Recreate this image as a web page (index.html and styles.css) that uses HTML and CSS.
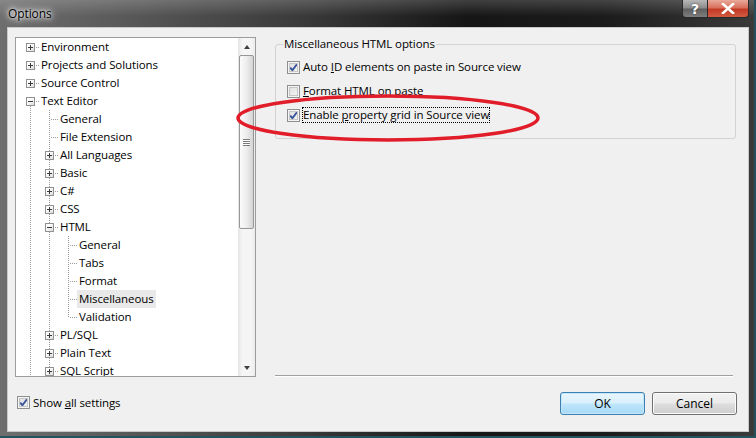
FILE: index.html
```html
<!DOCTYPE html>
<html>
<head>
<meta charset="utf-8">
<link rel="stylesheet" href="styles.css">
</head>
<body>
<div class="window">
  <div class="titlebar">
    <span class="title">Options</span>
    <div class="caption-btns">
      <span class="cap help">?</span>
      <span class="cap close"><svg width="14" height="11" viewBox="0 0 14 11"><path d="M2 1 L12 10 M12 1 L2 10" stroke="#fff" stroke-width="2.6" stroke-linecap="square"/></svg></span>
    </div>
  </div>
  <div class="client">
    <div class="main">
      <div class="tree">
        <div class="tree-items">
          <div class="row"><span class="g exp"><i class="box plus"></i></span><span class="lbl">Environment</span></div>
          <div class="row"><span class="g exp"><i class="box plus"></i></span><span class="lbl">Projects and Solutions</span></div>
          <div class="row"><span class="g exp"><i class="box plus"></i></span><span class="lbl">Source Control</span></div>
          <div class="row"><span class="g exp vd"><i class="box"></i></span><span class="lbl">Text Editor</span></div>
          <div class="row"><span class="g v"></span><span class="g t"></span><span class="lbl">General</span></div>
          <div class="row"><span class="g v"></span><span class="g t"></span><span class="lbl">File Extension</span></div>
          <div class="row"><span class="g v"></span><span class="g exp vf"><i class="box plus"></i></span><span class="lbl">All Languages</span></div>
          <div class="row"><span class="g v"></span><span class="g exp vf"><i class="box plus"></i></span><span class="lbl">Basic</span></div>
          <div class="row"><span class="g v"></span><span class="g exp vf"><i class="box plus"></i></span><span class="lbl">C#</span></div>
          <div class="row"><span class="g v"></span><span class="g exp vf"><i class="box plus"></i></span><span class="lbl">CSS</span></div>
          <div class="row"><span class="g v"></span><span class="g exp vf"><i class="box"></i></span><span class="lbl">HTML</span></div>
          <div class="row"><span class="g v"></span><span class="g v"></span><span class="g t"></span><span class="lbl">General</span></div>
          <div class="row"><span class="g v"></span><span class="g v"></span><span class="g t"></span><span class="lbl">Tabs</span></div>
          <div class="row"><span class="g v"></span><span class="g v"></span><span class="g t"></span><span class="lbl">Format</span></div>
          <div class="row"><span class="g v"></span><span class="g v"></span><span class="g t"></span><span class="lbl sel">Miscellaneous</span></div>
          <div class="row"><span class="g v"></span><span class="g v"></span><span class="g l"></span><span class="lbl">Validation</span></div>
          <div class="row"><span class="g v"></span><span class="g exp vf"><i class="box plus"></i></span><span class="lbl">PL/SQL</span></div>
          <div class="row"><span class="g v"></span><span class="g exp vf"><i class="box plus"></i></span><span class="lbl">Plain Text</span></div>
          <div class="row"><span class="g v"></span><span class="g exp vf"><i class="box plus"></i></span><span class="lbl">SQL Script</span></div>
        </div>
        <div class="vscroll">
          <div class="sb-btn"><i class="arr up"></i></div>
          <div class="thumb"><i class="grip"></i></div>
          <div class="track"></div>
          <div class="sb-btn"><i class="arr down"></i></div>
        </div>
      </div>
      <div class="right">
        <fieldset class="group">
          <legend>Miscellaneous HTML options</legend>
          <div class="opts">
            <div class="opt"><span class="cb on"></span><span class="txt">Auto <u>I</u>D elements on paste in Source view</span></div>
            <div class="opt"><span class="cb"></span><span class="txt"><u>F</u>ormat HTML on paste</span></div>
            <div class="opt"><span class="cb on"></span><span class="txt focus">Enable <u>p</u>roperty grid in Source view</span></div>
          </div>
        </fieldset>
        <div class="sep"></div>
      </div>
    </div>
    <div class="bottom">
      <div class="opt showall"><span class="cb on"></span><span class="txt">Show <u>a</u>ll settings</span></div>
      <button class="btn default">OK</button>
      <button class="btn">Cancel</button>
    </div>
  </div>
  <svg class="annot" width="310" height="52" viewBox="0 0 310 52"><ellipse cx="154" cy="25" rx="150" ry="22" fill="none" stroke="#e11d2a" stroke-width="3.5"/></svg>
</div>
</body>
</html>
```
FILE: styles.css
```css
* { box-sizing: border-box; }
html, body { margin: 0; padding: 0; }
body {
  width: 756px; height: 438px; overflow: hidden;
  font-family: "Open Sans", "Noto Sans", sans-serif;
  font-size: 11.5px; letter-spacing: -0.1px; color: #000;
  background: #1e1e1e;
}
.window {
  position: relative;
  width: 756px; height: 438px;
  display: flex; flex-direction: column;
  background: linear-gradient(to right, #6e6e6e 0%, #575757 18%, #3a3a3a 40%, #161616 62%, #1b1b1b 80%, #3a3a3a 100%);
  border-right: 2px solid #23505c;
  border-bottom: 2px solid #24525e;
}
.titlebar {
  height: 27px; flex: none;
  display: flex; align-items: flex-start;
  background: linear-gradient(to bottom, rgba(255,255,255,0.18), rgba(255,255,255,0) 60%);
}
.title {
  padding-left: 8px; line-height: 28px;
  font-size: 12px;
  color: #000;
  text-shadow: 0 0 6px #fff, 0 0 10px #fff, 0 0 3px rgba(255,255,255,0.9);
}
.caption-btns { margin-left: auto; margin-right: 5px; display: flex; }
.cap {
  height: 18px; display: flex; align-items: center; justify-content: center;
  border: 1px solid #2a2a2a; border-top: none;
  color: #fff; font-weight: bold; font-family: "DejaVu Sans", sans-serif; font-size: 14px;
}
.help {
  width: 25px; border-right: none; border-bottom-left-radius: 4px;
  background: linear-gradient(to bottom, #b7b7b7 0%, #8a8a8a 48%, #5e5e5e 52%, #7e7e7e 100%);
  text-shadow: 0 0 2px #333;
}
.close {
  width: 42px; border-bottom-right-radius: 4px;
  background: linear-gradient(to bottom, #e9a99a 0%, #d8705c 45%, #c53a24 55%, #d25a40 100%);
}
.client {
  flex: 1;
  margin: 0 5px 4px 7px;
  background: #f0f0f0;
  border: 1px solid #c9c9c9;
  display: flex; flex-direction: column;
}
.main { display: flex; padding: 9px 12px 0 7px; }
.tree {
  width: 241px; height: 340px; flex: none;
  border: 1px solid #9c9c9c;
  background: #fff;
  display: flex; overflow: hidden;
}
.tree-items { flex: 1; padding-left: 5px; overflow: hidden; }
.row { display: flex; height: 18px; }
.g {
  --dot: #9a9a9a;
  display: block; width: 19px; height: 18px; flex: none;
  background-repeat: no-repeat;
}
.v {
  background-image: repeating-linear-gradient(to bottom, var(--dot) 0 1px, transparent 1px 2px);
  background-position: 9px 0; background-size: 1px 18px;
}
.t, .l {
  background-image: repeating-linear-gradient(to bottom, var(--dot) 0 1px, transparent 1px 2px),
                    repeating-linear-gradient(to right, var(--dot) 0 1px, transparent 1px 2px);
  background-position: 9px 0, 11px 9px;
  background-size: 1px 18px, 8px 1px;
}
.l { background-size: 1px 10px, 8px 1px; }
.exp {
  background-image: repeating-linear-gradient(to right, var(--dot) 0 1px, transparent 1px 2px);
  background-position: 15px 9px; background-size: 4px 1px;
}
.exp.vf {
  background-image: repeating-linear-gradient(to right, var(--dot) 0 1px, transparent 1px 2px),
                    repeating-linear-gradient(to bottom, var(--dot) 0 1px, transparent 1px 2px);
  background-position: 15px 9px, 9px 0; background-size: 4px 1px, 1px 18px;
}
.exp.vd {
  background-image: repeating-linear-gradient(to right, var(--dot) 0 1px, transparent 1px 2px),
                    repeating-linear-gradient(to bottom, var(--dot) 0 1px, transparent 1px 2px);
  background-position: 15px 9px, 9px 14px; background-size: 4px 1px, 1px 4px;
}
.box {
  display: block; width: 9px; height: 9px; margin: 5px 0 0 5px;
  border: 1px solid #919191;
  background: linear-gradient(#3a3a3a, #3a3a3a) center / 5px 1px no-repeat,
              linear-gradient(135deg, #ffffff 30%, #dcdcdc 100%);
}
.box.plus {
  background: linear-gradient(#3a3a3a, #3a3a3a) center / 5px 1px no-repeat,
              linear-gradient(#3a3a3a, #3a3a3a) center / 1px 5px no-repeat,
              linear-gradient(135deg, #ffffff 30%, #dcdcdc 100%);
}
.lbl {
  line-height: 18px; height: 18px;
  padding: 0 2px; margin-left: -1px;
  white-space: nowrap;
}
.lbl.sel { background: #e9e9e9; }
.vscroll {
  width: 17px; flex: none;
  display: flex; flex-direction: column;
  background: linear-gradient(to right, #e4e4e4 0%, #f5f5f5 25%, #f5f5f5 75%, #ececec 100%);
}
.sb-btn { height: 17px; flex: none; display: flex; align-items: center; justify-content: center; }
.arr { display: block; width: 0; height: 0; border-left: 3.5px solid transparent; border-right: 3.5px solid transparent; }
.arr.up { border-bottom: 4px solid #404040; }
.arr.down { border-top: 4px solid #404040; }
.thumb {
  height: 174px; flex: none; margin: 0 1px 0 1px;
  border: 1px solid #979797; border-radius: 2px;
  background: linear-gradient(to right, #fbfbfb 0%, #ededed 50%, #d5d5d5 100%);
  display: flex; align-items: center; justify-content: center;
}
.grip {
  display: block; width: 7px; height: 7px;
  background: repeating-linear-gradient(to bottom, #7a7a7a 0 1px, #fff 1px 2px);
}
.track { flex: 1; }
.right {
  flex: 1; margin-left: 19px;
  display: flex; flex-direction: column;
}
.group {
  margin: -1px 0 0 0;
  padding: 0 10px 11px 11px;
  border: 1px solid #d3d3d3; border-radius: 3px;
  min-width: 0;
}
.group legend {
  padding: 0 1px; margin-left: -4px;
  line-height: 16px;
}
.opts { padding-top: 3px; }
.opt { display: flex; align-items: center; height: 24px; white-space: nowrap; }
.cb {
  width: 13px; height: 13px; flex: none;
  border: 1px solid #8e8f8f;
  background: linear-gradient(135deg, #dcdcdc 0%, #f7f7f7 100%);
  box-shadow: inset 0 0 0 1px #f4f4f4, inset 0 0 0 2px #c6c6c6;
  margin-right: 2px;
}
.cb.on {
  background:
    url("data:image/svg+xml;utf8,<svg xmlns='http://www.w3.org/2000/svg' width='11' height='11' viewBox='0 0 11 11'><path d='M2.2 5.6 L4.4 8.2 L8.9 2.2' fill='none' stroke='%2338529a' stroke-width='1.9'/></svg>") center no-repeat,
    linear-gradient(135deg, #dcdcdc 0%, #f7f7f7 100%);
}
.txt { border: 1px solid transparent; padding: 0; line-height: 14px; }
.txt.focus { border: 1px dotted #000; }
.sep {
  margin-top: auto; margin-right: 3px;
  height: 2px; border-top: 1px solid #a0a0a0; border-bottom: 1px solid #fff;
}
.bottom {
  flex: 1;
  display: flex; align-items: flex-start;
  padding: 15px 11px 0 9px;
}
.showall { height: 19px; margin-top: 1px; margin-right: auto; }
.btn {
  width: 85px; height: 23px;
  font-family: inherit; font-size: 12px; color: #000;
  border: 1px solid #707070; border-radius: 3px;
  background: linear-gradient(to bottom, #f2f2f2 0%, #ebebeb 48%, #dddddd 52%, #cfcfcf 100%);
  box-shadow: inset 0 0 0 1px #fcfcfc;
  padding: 0;
}
.btn + .btn { margin-left: 7px; }
.btn.default {
  border-color: #3c7fb1;
  background: linear-gradient(to bottom, #eaf6fd 0%, #d9f0fc 48%, #bee6fd 52%, #a7d9f5 100%);
  box-shadow: inset 0 0 0 1px #c4e6f8;
}
.annot { position: absolute; left: 234px; top: 93px; }
```
